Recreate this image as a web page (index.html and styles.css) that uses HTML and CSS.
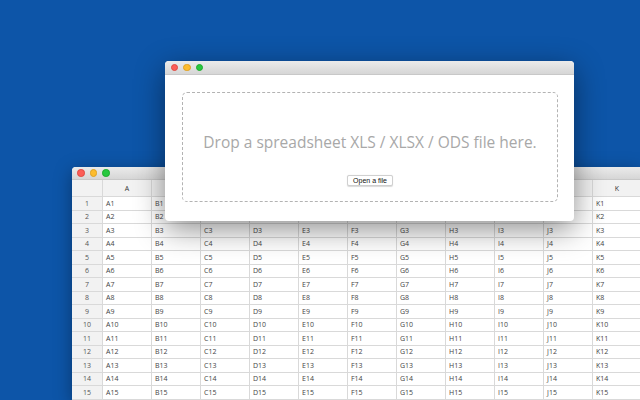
FILE: index.html
```html
<!DOCTYPE html>
<html>
<head>
<meta charset="utf-8">
<link rel="stylesheet" href="styles.css">
</head>
<body>
<div class="desktop">
  <div class="window sheet">
    <div class="titlebar">
      <span class="light red"></span><span class="light yellow"></span><span class="light green"></span>
    </div>
    <div class="grid" id="grid">
      <div class="row head">
        <div class="cell num"></div>
        <div class="cell">A</div><div class="cell">B</div><div class="cell">C</div><div class="cell">D</div><div class="cell">E</div><div class="cell">F</div><div class="cell">G</div><div class="cell">H</div><div class="cell">I</div><div class="cell">J</div><div class="cell">K</div>
      </div>
    </div>
  </div>
  <div class="window dialog">
    <div class="titlebar">
      <span class="light red"></span><span class="light yellow"></span><span class="light green"></span>
    </div>
    <div class="dialog-body">
      <div class="dropzone">
        <div class="drop-text">Drop a spreadsheet XLS / XLSX / ODS file here.</div>
        <button class="open-btn">Open a file</button>
      </div>
    </div>
  </div>
</div>
<script>
  var g = document.getElementById('grid');
  var cols = ['A','B','C','D','E','F','G','H','I','J','K'];
  for (var r = 1; r <= 15; r++) {
    var row = document.createElement('div');
    row.className = 'row';
    var n = document.createElement('div');
    n.className = 'cell num';
    n.textContent = r;
    row.appendChild(n);
    cols.forEach(function (c) {
      var d = document.createElement('div');
      d.className = 'cell';
      d.textContent = c + r;
      row.appendChild(d);
    });
    g.appendChild(row);
  }
</script>
</body>
</html>
```

FILE: styles.css
```css
html, body {
  margin: 0;
  padding: 0;
}
body {
  background: #0d55a8;
  width: 640px;
  height: 400px;
  overflow: hidden;
  font-family: "Open Sans", "Liberation Sans", sans-serif;
}
.desktop {
  position: relative;
  width: 640px;
  height: 400px;
  overflow: hidden;
}
.window {
  position: absolute;
  background: #fff;
  border-radius: 4px 4px 0 0;
  overflow: hidden;
}
.titlebar {
  height: 13px;
  background: linear-gradient(#ebebeb, #d6d6d6);
  border-bottom: 1px solid #c8c8c8;
  display: flex;
  align-items: center;
  gap: 5px;
  padding-left: 5px;
  box-sizing: border-box;
}
.light {
  width: 7.5px;
  height: 7.5px;
  border-radius: 50%;
  display: block;
  box-sizing: border-box;
}
.red { background: #fc5d57; border: 0.5px solid #de4a43; }
.yellow { background: #fdbc2e; border: 0.5px solid #dea123; }
.green { background: #28c840; border: 0.5px solid #1dac2d; }

.sheet {
  left: 72px;
  top: 167px;
  width: 568px;
  height: 233px;
  border-radius: 4px 0 0 0;
  box-shadow: 0 4px 18px rgba(0, 0, 0, 0.35);
}
.grid {
  display: flex;
  flex-direction: column;
}
.row {
  display: grid;
  grid-template-columns: 31px repeat(11, 49px);
  height: 13.5px;
}
.row.head {
  height: 17px;
  background: #f2f2f2;
}
.cell {
  box-sizing: border-box;
  border-right: 1px solid #d9d9d9;
  border-bottom: 1px solid #d9d9d9;
  font-size: 7px;
  color: #444;
  padding-left: 3px;
  display: flex;
  align-items: center;
  white-space: nowrap;
  overflow: hidden;
}
.head .cell {
  justify-content: center;
  padding-left: 0;
  color: #333;
  background: #f2f2f2;
}
.cell.num {
  background: #f2f2f2;
  justify-content: center;
  padding-left: 0;
  color: #555;
}

.dialog {
  left: 165px;
  top: 61px;
  width: 409px;
  height: 160px;
  border-radius: 4px;
  box-shadow: 0 8px 30px rgba(0, 0, 0, 0.45);
}
.dialog .titlebar {
  height: 14px;
  padding-left: 5.5px;
}
.dialog-body {
  padding: 17px 16px 19px 17px;
  height: 146px;
  box-sizing: border-box;
}
.dropzone {
  height: 100%;
  box-sizing: border-box;
  border: 1.5px dashed #b3b3b3;
  border-radius: 5px;
  display: flex;
  flex-direction: column;
  align-items: center;
  padding-top: 38px;
}
.drop-text {
  font-size: 15.5px;
  color: #a8a8a8;
  line-height: 22px;
}
.open-btn {
  margin-top: 22px;
  height: 11px;
  padding: 0 5px;
  font-family: "Liberation Sans", Arial, sans-serif;
  font-size: 7px;
  line-height: 9px;
  color: #111;
  background: #fff;
  border: 1px solid #d0d0d0;
  border-radius: 2px;
  box-shadow: 0 0.5px 1px rgba(0,0,0,0.15);
}
```
